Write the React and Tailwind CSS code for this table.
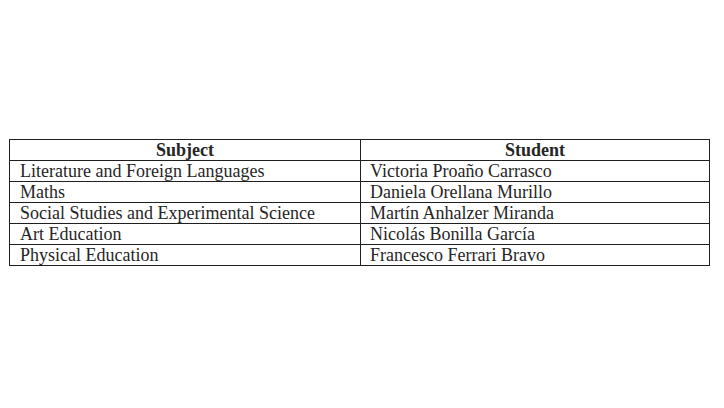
export default function App() {
  const rows = [
    ["Literature and Foreign Languages", "Victoria Proaño Carrasco", "h-[20px]"],
    ["Maths", "Daniela Orellana Murillo", "h-[20px]"],
    ["Social Studies and Experimental Science", "Martín Anhalzer Miranda", "h-[21px]"],
    ["Art Education", "Nicolás Bonilla García", "h-[20px]"],
    ["Physical Education", "Francesco Ferrari Bravo", "h-[20px]"],
  ];
  return (
    <div className="w-[724px] h-[408px] bg-white pt-[139px] pl-[9px]" style={{ fontFamily: '"Liberation Serif", "Times New Roman", serif' }}>
      <table className="w-[701px] border-collapse text-[18px] leading-[20px] text-[#262626]">
        <thead>
          <tr>
            <th className="w-[351px] h-[20px] p-0 border border-[#1f1f1f] font-bold text-center">Subject</th>
            <th className="h-[20px] p-0 border border-[#1f1f1f] font-bold text-center">Student</th>
          </tr>
        </thead>
        <tbody>
          {rows.map(([a, b, h]) => (
            <tr key={a} className={h}>
              <td className="p-0 pl-[10px] border border-[#1f1f1f]">{a}</td>
              <td className="p-0 pl-[9px] border border-[#1f1f1f]">{b}</td>
            </tr>
          ))}
        </tbody>
      </table>
    </div>
  );
}
